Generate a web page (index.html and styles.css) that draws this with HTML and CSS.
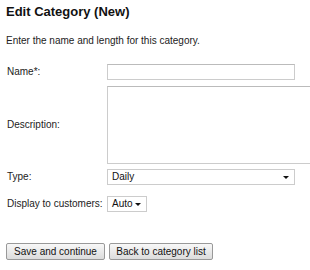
FILE: index.html
```html
<!DOCTYPE html>
<html lang="en">
<head>
  <meta charset="UTF-8">
  <title>Edit Category (New)</title>
  <link rel="stylesheet" href="styles.css">
</head>
<body>

  <h1>Edit Category (New)</h1>
  <p class="intro">Enter the name and length for this category.</p>

  <form class="form">
    <div class="row">
      <label class="label" for="name">Name*:</label>
      <input class="field" id="name" type="text">
    </div>

    <div class="row">
      <label class="label" for="desc">Description:</label>
      <textarea class="field area" id="desc"></textarea>
    </div>

    <div class="row type-row">
      <label class="label">Type:</label>
      <div class="select wide">
        <span>Daily</span>
        <i class="arrow"></i>
      </div>
    </div>

    <div class="row display-row">
      <label class="label">Display to customers:</label>
      <div class="select small">
        <span>Auto</span>
        <i class="arrow"></i>
      </div>
    </div>
  </form>

  <div class="buttons">
    <button type="button">Save and continue</button>
    <button type="button">Back to category list</button>
  </div>

</body>
</html>
```

FILE: styles.css
```css
* { box-sizing: border-box; }
body {
  font-family: 'Liberation Sans', Arial, sans-serif;
  font-size: 10px;
  line-height: 12px;
  color: #222;
  background: #fff;
  margin: 0;
  padding: 4px 6px;
  overflow: hidden;
}

h1 {
  font-size: 13px;
  font-weight: bold;
  color: #111;
  margin: 0;
  line-height: 16px;
}

.intro {
  margin: 15px 0 0;
}

.form {
  display: flex;
  flex-direction: column;
  gap: 6px;
  margin-top: 17px;
}

.row {
  display: flex;
  align-items: center;
}

.type-row {
  margin-top: -1px;
}

.display-row {
  margin-top: 5px;
}

.label {
  width: 101px;
  flex: none;
  padding-left: 1px;
  white-space: nowrap;
}

.field {
  height: 16px;
  width: 188px;
  flex: none;
  border: 1px solid #ccc;
  border-top-color: #bbb;
  background: #fff;
  margin: 0;
  padding: 0 3px;
  font: inherit;
}

.area {
  width: 204px;
  height: 78px;
  margin-right: -8px;
  resize: none;
}

.select {
  display: flex;
  align-items: center;
  justify-content: space-between;
  height: 16px;
  border: 1px solid #ccc;
  background: #fff;
  padding: 0 5px 0 4px;
  color: #111;
}

.wide {
  width: 188px;
}

.small {
  width: 40px;
}

.arrow {
  width: 0;
  height: 0;
  border-left: 3px solid transparent;
  border-right: 3px solid transparent;
  border-top: 3px solid #111;
  margin-top: 1px;
}

.buttons {
  display: flex;
  gap: 4px;
  margin-top: 31px;
}

button {
  font: inherit;
  font-size: 10px;
  color: #111;
  height: 17px;
  width: 99px;
  padding: 0;
  border: 1px solid #999;
  border-radius: 2px;
  background: linear-gradient(#f8f8f8, #dcdcdc);
  line-height: 15px;
}

button + button {
  width: 104px;
}
```
